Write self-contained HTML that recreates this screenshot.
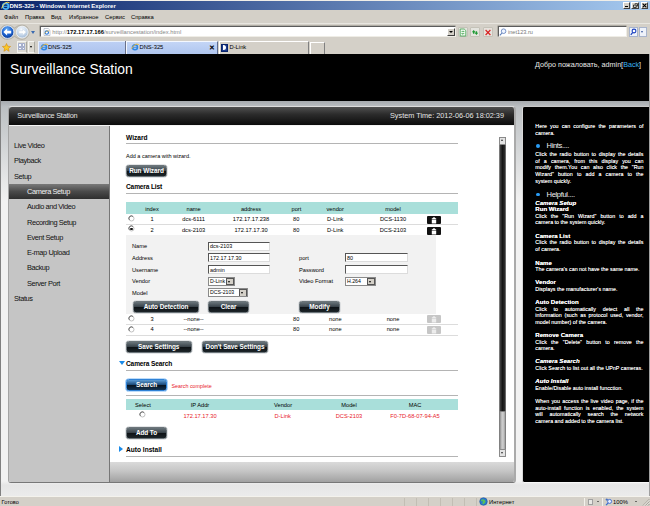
<!DOCTYPE html>
<html><head><meta charset="utf-8"><title>DNS-325</title>
<style>
html,body{margin:0;padding:0}
body{width:650px;height:506px;position:relative;overflow:hidden;background:#d4d0c8;font-family:"Liberation Sans",sans-serif;font-size:6px;color:#000}
div,span{box-sizing:border-box}
.a{position:absolute}
.t{position:absolute;white-space:nowrap;line-height:10px;height:10px;margin-top:-5px}
.c{text-align:center}
.b{font-weight:bold}
.red{color:#e8202a}
.btn{position:absolute;height:12px;border-radius:2.5px;background:linear-gradient(#6a757b 0%,#39434a 46%,#0d1216 52%,#1d2529 100%);border:1px solid #6c757a;color:#fff;font-weight:bold;font-size:6.4px;letter-spacing:-.05px;text-align:center;line-height:10px;white-space:nowrap;box-shadow:0 0 0 .5px #c8cccf}
.inp{position:absolute;height:9px;padding-top:.7px;background:#fff;border:1px solid #555;border-right-color:#dcdcdc;border-bottom-color:#dcdcdc;font-size:5.4px;line-height:7.6px;padding-left:1px;white-space:nowrap;overflow:hidden}
.sel{position:absolute;height:9px;background:#fff;border:1px solid #8a8a8a;font-size:5.2px;line-height:7.6px;padding-left:1px;white-space:nowrap;overflow:hidden}
.sel i{position:absolute;right:0;top:0;width:6px;height:5.5px;background:#d4d0c8;border:.5px solid #555;display:block}
.sel i:after{content:"";position:absolute;left:1.2px;top:2px;border:1.5px solid transparent;border-top:2px solid #000}
.hl{position:absolute;height:1px;background:#b4b4b4}
.th{position:absolute;background:#a9dfda}
.rad{position:absolute;width:5px;height:5px;border-radius:50%;background:#fff;border:1px solid #777;border-right-color:#ccc;border-bottom-color:#ccc}
.h{position:absolute;left:535.3px;width:108.2px;color:#fff;text-shadow:0 0 .45px rgba(255,255,255,.85);font-size:5.35px;line-height:6.6px;height:6.6px;text-align:justify;white-space:nowrap}
.hb{font-weight:bold;font-size:6.1px}
.hi{font-weight:bold;font-style:italic;font-size:6.1px}
.side{position:absolute;font-size:7.4px;letter-spacing:-.4px;color:#111;white-space:nowrap;line-height:10px;height:10px;margin-top:-5px}
</style></head><body>

<!-- ===== Title bar ===== -->
<div class="a" style="left:0;top:0;width:650px;height:1px;background:#f0eee8"></div>
<div class="a" style="left:0;top:1px;width:650px;height:9.2px;background:linear-gradient(90deg,#0a246a 0%,#a6caf0 100%)"></div>
<svg class="a" style="left:.5px;top:.8px" width="9" height="9.500" viewBox="0 0 9 9.500"><circle cx="4.600" cy="5.200" r="2.900" fill="none" stroke="#48b4f6" stroke-width="1.700"/><path d="M2 5.300h5.200" stroke="#48b4f6" stroke-width="1"/><path d="M.6 7.400Q3.600 -.6 8.600 1.800" stroke="#f6d050" stroke-width="1" fill="none"/></svg>
<div class="t b" style="left:9.5px;top:5.6px;color:#fff;font-size:6.02px">DNS-325 - Windows Internet Explorer</div>
<div class="a" style="left:623.3px;top:2px;width:7px;height:6.5px;background:#d4d0c8;border:.6px solid #fff;border-right-color:#404040;border-bottom-color:#404040"></div>
<div class="a" style="left:631.3px;top:2px;width:7.500px;height:6.5px;background:#d4d0c8;border:.6px solid #fff;border-right-color:#404040;border-bottom-color:#404040"></div>
<div class="a" style="left:640.700px;top:2px;width:7.500px;height:6.5px;background:#d4d0c8;border:.6px solid #fff;border-right-color:#404040;border-bottom-color:#404040"></div>
<div class="a" style="left:625px;top:6.200px;width:3px;height:1px;background:#000"></div>
<svg class="a" style="left:632.500px;top:2.800px" width="5" height="5" viewBox="0 0 5 5"><path d="M1.800 .700h2.700v2.400h-1M.5 2h2.700v2.500h-2.700z" fill="none" stroke="#000" stroke-width=".7"/></svg>
<svg class="a" style="left:642px;top:2.800px" width="5" height="5" viewBox="0 0 5 5"><path d="M.6 .6l3.800 3.800M4.400 .6l-3.800 3.800" stroke="#000" stroke-width="1.100"/></svg>

<!-- ===== Menu bar ===== -->
<div class="t" style="left:4px;top:17px;font-size:5.8px">Файл</div>
<div class="t" style="left:25px;top:17px;font-size:5.8px">Правка</div>
<div class="t" style="left:51px;top:17px;font-size:5.8px">Вид</div>
<div class="t" style="left:69px;top:17px;font-size:5.8px">Избранное</div>
<div class="t" style="left:105px;top:17px;font-size:5.8px">Сервис</div>
<div class="t" style="left:131px;top:17px;font-size:5.8px">Справка</div>
<div class="a" style="left:0;top:23px;width:650px;height:1px;background:#e8e6e0"></div>

<!-- ===== Address bar ===== -->
<svg class="a" style="left:0;top:24px" width="30" height="16" viewBox="0 0 30 16">
<defs><radialGradient id="gb" cx="45%" cy="30%" r="75%"><stop offset="0" stop-color="#6ab0f8"/><stop offset=".55" stop-color="#1c62d0"/><stop offset="1" stop-color="#0a3488"/></radialGradient>
<radialGradient id="gf" cx="45%" cy="30%" r="75%"><stop offset="0" stop-color="#f8fbfe"/><stop offset=".6" stop-color="#c4d6ea"/><stop offset="1" stop-color="#9cb4d0"/></radialGradient></defs>
<path d="M7 1a7 7 0 0 0 0 14.4q4 0 7.5-3q3.5 3 7.5 3a7 7 0 0 0 0-14.4q-4 0-7.5 3q-3.500-3-7.500-3z" fill="#c8c6be" stroke="#9a978c" stroke-width=".5"/>
<circle cx="7.6" cy="8.1" r="6.3" fill="url(#gb)" stroke="#eef4fc" stroke-width=".8"/>
<path d="M3.400 8.100l3.700-3.500v2.100h4.100v2.800h-4.100v2.100z" fill="#fff"/>
<circle cx="22.200" cy="8.100" r="5.900" fill="url(#gf)" stroke="#f4f6fa" stroke-width=".8"/>
<path d="M26.200 8.100l-3.500-3.300v2h-3.900v2.600h3.900v2z" fill="#fff" stroke="#aebfd6" stroke-width=".3"/>
</svg>
<div class="a" style="left:30.5px;top:31px;border:2.5px solid transparent;border-top:3px solid #3a6ab0"></div>
<div class="a" style="left:40px;top:26px;width:415.5px;height:11px;background:#fff;border:1px solid;border-color:#5c5c5c #efede6 #efede6 #5c5c5c;box-shadow:-.5px -.5px 0 #8c8a82"></div>
<svg class="a" style="left:42.5px;top:27.5px" width="8" height="8" viewBox="0 0 8 8"><path d="M1 .5h4.200l1.800 1.800v5.200h-6z" fill="#fff" stroke="#8a96a8" stroke-width=".5"/><circle cx="3.800" cy="4.600" r="1.700" fill="none" stroke="#2a7ae0" stroke-width="1.100"/><path d="M1.400 5.800q2-4 5-3" stroke="#e8b020" stroke-width=".6" fill="none"/></svg>
<div class="t" style="left:52.3px;top:32px;font-size:5.8px;color:#888">http://<span style="color:#000;font-weight:bold">172.17.17.166</span>/surveillancestation/index.html</div>
<div class="a" style="left:446.5px;top:27.5px;width:8px;height:8.5px;background:#d4d0c8;border:.5px solid #fff;border-right-color:#404040;border-bottom-color:#404040"></div>
<div class="a" style="left:448.5px;top:31px;border:2px solid transparent;border-top:2.5px solid #000"></div>
<div class="a" style="left:457.5px;top:26.5px;width:10px;height:10.500px;background:#e4e4de;border:.5px solid #c4c2b8;border-radius:1px"></div>
<svg class="a" style="left:458.5px;top:27.5px" width="8" height="9" viewBox="0 0 8 9"><path d="M1.200 1h4l1.600 1.600v5.400h-5.600z" fill="#f4fbf4" stroke="#3aa04a" stroke-width=".8"/><path d="M2.500 3.600h2.600l-.9-.9M5.300 5.600h-2.600l.9.900" stroke="#2a9a3a" stroke-width=".7" fill="none"/></svg>
<div class="a" style="left:470px;top:26.500px;width:10px;height:10.500px;background:#e4e4de;border:.5px solid #c4c2b8;border-radius:1px"></div>
<svg class="a" style="left:471px;top:27.500px" width="8" height="9" viewBox="0 0 8 9"><path d="M.8 4.200l1.900-2.200 1.900 2.200h-1.200v1.600h-1.400v-1.600zM3.600 4.800l1.800 2.200 1.900-2.200h-1.200v-1.600h-1.400v1.600z" fill="#1f9a34"/></svg>
<div class="a" style="left:482.500px;top:26.500px;width:10px;height:10.500px;background:#e6e2dc;border:.5px solid #c4c2b8;border-radius:1px"></div>
<svg class="a" style="left:483.500px;top:27.500px" width="8" height="9" viewBox="0 0 8 9"><path d="M1.600 2l4.800 5M6.400 2l-4.800 5" stroke="#d82424" stroke-width="1.200"/></svg>
<div class="a" style="left:497.5px;top:26px;width:129px;height:11px;background:#fff;border:1px solid;border-color:#5c5c5c #efede6 #efede6 #5c5c5c;box-shadow:-.5px -.5px 0 #8c8a82"></div>
<svg class="a" style="left:499px;top:27.5px" width="8" height="8" viewBox="0 0 8 8"><circle cx="4.6" cy="3.2" r="2.3" fill="#eef4ff" stroke="#5a7ab8" stroke-width=".8"/><path d="M3 5 L.8 7.4" stroke="#5a7ab8" stroke-width="1.1"/></svg>
<div class="t" style="left:508px;top:32px;font-size:5.6px;color:#777">inet123.ru</div>
<div class="a" style="left:629px;top:27px;width:9px;height:9.5px;background:#eef2fa;border:.5px solid #a8b4cc"></div>
<svg class="a" style="left:630px;top:28px" width="7" height="8" viewBox="0 0 7 8"><circle cx="4" cy="3" r="1.9" fill="#fff" stroke="#1a40c0" stroke-width="1.1"/><path d="M2.6 4.6 L.8 6.8" stroke="#1a40c0" stroke-width="1.2"/></svg>
<div class="a" style="left:638.5px;top:27px;width:8px;height:9.5px;background:#eef2fa;border:.5px solid #a8b4cc"></div>
<div class="a" style="left:641px;top:31px;border:1.5px solid transparent;border-top:2px solid #3a5aa0"></div>

<!-- ===== Tab bar ===== -->
<svg class="a" style="left:1.500px;top:42.800px" width="9" height="9" viewBox="0 0 9 9"><path d="M4.500 .500l1.200 2.700 2.900.300-2.200 1.900.700 2.900-2.600-1.600-2.600 1.600.700-2.900-2.200-1.900 2.900-.300z" fill="#fbc928" stroke="#d48a10" stroke-width=".6"/></svg>
<div class="a" style="left:16.5px;top:41px;width:10px;height:12px;background:#dcdad2;border:.5px solid #f4f4f0;border-right-color:#a8a8a0"></div>
<div class="a" style="left:18.2px;top:43.3px;width:3.400px;height:3.400px;border:.6px solid #a4aecb;background:#f6f8fe;border-radius:.6px"></div>
<div class="a" style="left:21.7px;top:43.3px;width:3.400px;height:3.400px;border:.6px solid #a4aecb;background:#f6f8fe;border-radius:.6px"></div>
<div class="a" style="left:18.2px;top:46.8px;width:3.400px;height:3.400px;border:.6px solid #a4aecb;background:#f6f8fe;border-radius:.6px"></div>
<div class="a" style="left:21.7px;top:46.8px;width:3.400px;height:3.400px;border:.6px solid #a4aecb;background:#f6f8fe;border-radius:.6px"></div>
<div class="a" style="left:28px;top:41px;width:7px;height:12px;background:#dcdad2;border:.5px solid #f4f4f0;border-right-color:#a8a8a0"></div>
<div class="a" style="left:29.8px;top:46px;border:1.7px solid transparent;border-top:2.2px solid #000"></div>
<div class="a" style="left:38px;top:40.5px;width:87px;height:13.5px;background:linear-gradient(#bccff4,#adc3ed);border-left:1px solid #e8f0fc;border-top:.5px solid #e8f0fc"></div>
<div class="a" style="left:126px;top:40.500px;width:91.500px;height:13.500px;background:linear-gradient(#c3d5f6,#b0c6ef);border-left:1px solid #f4f8ff;border-right:1px solid #5a6a90;border-top:.6px solid #f4f8ff;box-shadow:-1px 0 0 #6a7088"></div>
<div class="a" style="left:218.5px;top:41px;width:90px;height:13px;background:#d4d0c8;border-left:1px solid #fff;border-right:1px solid #808080;border-top:.5px solid #fff"></div>
<div class="a" style="left:309.5px;top:41.5px;width:15px;height:12.5px;background:#d4d0c8;border-left:1px solid #fff;border-right:1px solid #808080;border-top:.5px solid #fff"></div>
<svg class="a" style="left:40px;top:43px" width="8" height="8" viewBox="0 0 8 8"><circle cx="4" cy="4.2" r="2.500" fill="none" stroke="#2f86e2" stroke-width="1.500"/><path d="M1.800 4.300h4.600" stroke="#2f86e2" stroke-width=".9"/><path d="M0.5 5.8 Q4 -0.5 7.8 1.6" stroke="#f0b830" stroke-width=".9" fill="none"/></svg>
<div class="t" style="left:48px;top:47.3px;font-size:5.8px">DNS-325</div>
<svg class="a" style="left:130.5px;top:43px" width="8" height="8" viewBox="0 0 8 8"><circle cx="4" cy="4.2" r="2.500" fill="none" stroke="#2f86e2" stroke-width="1.500"/><path d="M1.800 4.300h4.600" stroke="#2f86e2" stroke-width=".9"/><path d="M0.5 5.8 Q4 -0.5 7.8 1.6" stroke="#f0b830" stroke-width=".9" fill="none"/></svg>
<div class="t" style="left:139.5px;top:47.3px;font-size:5.8px">DNS-325</div>
<div class="t b" style="left:209.3px;top:47.5px;font-size:6.5px">✕</div>
<div class="a" style="left:221px;top:43.5px;width:7px;height:8px;background:#1a3a8c;border:.5px solid #0a246a"></div>
<div class="a" style="left:223px;top:45px;width:3.4px;height:5px;background:#fff;border-radius:0 3px 3px 0"></div>
<div class="t" style="left:229.5px;top:47.3px;font-size:5.8px">D-Link</div>

<!-- ===== Page ===== -->
<div class="a" id="page" style="left:0;top:54px;width:650px;height:442px;background:#e9e9e9;overflow:hidden">
</div>
<div class="a" style="left:1px;top:54px;width:648px;height:47px;background:#000"></div>
<div class="a" style="left:1px;top:101px;width:648px;height:395px;background:linear-gradient(#a6aaae 0,#bcc0c3 6px,#f2f2f2 100px,#f2f2f2 380px,#e6e6e6 384px,#ebebeb 100%)"></div>
<div class="a" style="left:0;top:54px;width:1px;height:442px;background:#808080"></div>
<div class="a" style="left:649px;top:54px;width:1px;height:442px;background:#a0a0a0"></div>
<div class="t" style="left:10px;top:68.6px;font-size:13.9px;color:#fff;line-height:20px;height:20px;margin-top:-10px">Surveillance Station</div>
<div class="t" style="left:535px;top:64.5px;font-size:7.2px;color:#e8e8e8">Добро пожаловать, admin[<span style="color:#3ab0f0">Back</span>]</div>

<!-- main panel -->
<div class="a" style="left:7.7px;top:106px;width:508.3px;height:377.3px;background:#fff;border-radius:4px 4px 3px 3px;border:1.3px solid #a4a4a4;border-right:2px solid #aaa;border-top:1px solid #dcdcdc;border-bottom:1px solid #777;overflow:hidden">
  <div class="a" style="left:0;top:0;width:510px;height:17.5px;background:linear-gradient(#505050,#2c2c2c 40%,#0c0c0c)"></div>
  <div class="a" style="left:0;top:17.5px;width:510px;height:1px;background:#f4f4f4"></div>
  <div class="a" style="left:0;top:18.5px;width:100px;height:360px;background:#c5c5c5"></div>
  <div class="a" style="left:100px;top:18.5px;width:1px;height:360px;background:#777"></div>
  <div class="a" style="left:0;top:77px;width:100px;height:14.5px;background:linear-gradient(#7a7a7a,#4a4a4a 50%,#2e2e2e)"></div>
  <div class="a" style="left:101px;top:354.5px;width:410px;height:22px;background:linear-gradient(#dadada,#c6c6c6 40%,#9a9a9a)"></div>
</div>
<div class="t" style="left:17.3px;top:115.7px;font-size:7.3px;letter-spacing:-.22px;color:#e4e4e4">Surveillance Station</div>
<div class="t" style="left:390px;top:115.5px;font-size:7.3px;color:#e4e4e4">System Time: 2012-06-06 18:02:39</div>

<!-- sidebar items -->
<div class="side" style="left:14px;top:146.0px">Live Video</div>
<div class="side" style="left:14px;top:161.3px">Playback</div>
<div class="side" style="left:14px;top:176.6px">Setup</div>
<div class="side" style="left:27px;top:191.9px;color:#f0f0f0">Camera Setup</div>
<div class="side" style="left:27px;top:207.2px">Audio and Video</div>
<div class="side" style="left:27px;top:222.5px">Recording Setup</div>
<div class="side" style="left:27px;top:237.8px">Event Setup</div>
<div class="side" style="left:27px;top:253.1px">E-map Upload</div>
<div class="side" style="left:27px;top:268.4px">Backup</div>
<div class="side" style="left:27px;top:283.7px">Server Port</div>
<div class="side" style="left:14px;top:299.0px">Status</div>

<!-- CONTENT -->
<div class="ct">
<!-- scrollbar -->
<div class="a" style="left:499px;top:137px;width:7px;height:320px;background:linear-gradient(90deg,#9a9a9a 0,#3a3a3a 1.5px,#161616 50%,#2a2a2a 80%,#8a8a8a 100%)"></div>
<div class="a" style="left:499px;top:137px;width:7px;height:8px;background:#e4e4e4;border:.7px solid #8a8a8a;border-radius:1px"></div>
<div class="a" style="left:501px;top:139px;border:1.5px solid transparent;border-bottom:2px solid #333;border-top:0"></div>
<div class="a" style="left:499px;top:410.7px;width:7px;height:46px;background:linear-gradient(90deg,#909090,#c4c4c4 35%,#d0d0d0 60%,#a0a0a0);border:.5px solid #808080"></div>
<div class="a" style="left:499px;top:448.5px;width:7px;height:8px;background:#e4e4e4;border:.7px solid #8a8a8a;border-radius:1px"></div>
<div class="a" style="left:501px;top:451.5px;border:1.5px solid transparent;border-top:2px solid #333;border-bottom:0"></div>

<!-- Wizard -->
<div class="t b" style="left:126px;top:137.6px;font-size:6.6px">Wizard</div>
<div class="hl" style="left:126px;top:143px;width:332px"></div>
<div class="t" style="left:126px;top:156.2px;font-size:5.5px">Add a camera with wizard.</div>
<div class="btn" style="left:126px;top:165px;width:41px">Run Wizard</div>
<div class="t b" style="left:126px;top:187.2px;font-size:6.6px;letter-spacing:-.15px">Camera List</div>
<div class="hl" style="left:126px;top:193px;width:332px"></div>

<!-- camera table -->
<div class="th" style="left:126px;top:202px;width:332px;height:12px"></div>
<div class="t c" style="left:142px;width:20px;top:208.5px;font-size:5.7px">index</div>
<div class="t c" style="left:178.6px;width:30px;top:208.5px;font-size:5.7px">name</div>
<div class="t c" style="left:231px;width:40px;top:208.5px;font-size:5.7px">address</div>
<div class="t" style="left:291.5px;top:208.5px;font-size:5.7px">port</div>
<div class="t" style="left:326.5px;top:208.5px;font-size:5.7px">vendor</div>
<div class="t c" style="left:378px;width:30px;top:208.5px;font-size:5.7px">model</div>

<svg class="a" style="left:128.0px;top:214.5px" width="7" height="7" viewBox="0 0 7 7"><circle cx="3.500" cy="3.500" r="2.500" fill="#fff" stroke="#b8b8b8" stroke-width=".9"/><path d="M1.300 4.800a2.500 2.500 0 0 1 3.600-3.400" fill="none" stroke="#555" stroke-width=".9"/></svg>
<div class="t c" style="left:142px;width:20px;top:219.2px;font-size:5.7px">1</div>
<div class="t c" style="left:178.6px;width:30px;top:219.2px;font-size:5.7px">dcs-6111</div>
<div class="t c" style="left:231px;width:40px;top:219.2px;font-size:5.7px">172.17.17.238</div>
<div class="t" style="left:293px;top:219.2px;font-size:5.7px">80</div>
<div class="t" style="left:327px;top:219.2px;font-size:5.7px">D-Link</div>
<div class="t c" style="left:378px;width:30px;top:219.2px;font-size:5.7px">DCS-1130</div>
<div class="hl" style="left:126px;top:224.3px;width:332px;background:#dcdcdc"></div>
<svg class="a" style="left:128.0px;top:225.1px" width="7" height="7" viewBox="0 0 7 7"><circle cx="3.500" cy="3.500" r="2.500" fill="#fff" stroke="#b8b8b8" stroke-width=".9"/><path d="M1.300 4.800a2.500 2.500 0 0 1 3.600-3.400" fill="none" stroke="#555" stroke-width=".9"/></svg>
<div class="a" style="left:130.4px;top:227.5px;width:2.200px;height:2.200px;border-radius:50%;background:#111"></div>
<div class="t c" style="left:142px;width:20px;top:229.8px;font-size:5.7px">2</div>
<div class="t c" style="left:178.6px;width:30px;top:229.8px;font-size:5.7px">dcs-2103</div>
<div class="t c" style="left:231px;width:40px;top:229.8px;font-size:5.7px">172.17.17.30</div>
<div class="t" style="left:293px;top:229.8px;font-size:5.7px">80</div>
<div class="t" style="left:327px;top:229.8px;font-size:5.7px">D-Link</div>
<div class="t c" style="left:378px;width:30px;top:229.8px;font-size:5.7px">DCS-2103</div>

<!-- delete icons -->
<svg class="a" style="left:427px;top:215.5px" width="14" height="8" viewBox="0 0 14 8"><rect width="14" height="8" rx="1" fill="#111"/><path d="M4.4 3.1L7 .9l2.6 2.2zM4.8 3.6h4.4v3.8H4.8z" fill="#fff"/></svg>
<svg class="a" style="left:427px;top:226.5px" width="14" height="8" viewBox="0 0 14 8"><rect width="14" height="8" rx="1" fill="#111"/><path d="M4.4 3.1L7 .9l2.6 2.2zM4.8 3.6h4.4v3.8H4.8z" fill="#fff"/></svg>

<!-- edit form -->
<div class="a" style="left:126px;top:235px;width:310px;height:79px;background:#f2f2f2"></div>
<div class="t" style="left:132px;top:246.2px;font-size:5.7px">Name</div>
<div class="inp" style="left:208px;top:241.5px;width:61.5px">dcs-2103</div>
<div class="t" style="left:132px;top:257.9px;font-size:5.7px">Address</div>
<div class="inp" style="left:208px;top:253.2px;width:61.5px">172.17.17.30</div>
<div class="t" style="left:132px;top:269.6px;font-size:5.7px">Username</div>
<div class="inp" style="left:208px;top:264.9px;width:61.5px">admin</div>
<div class="t" style="left:132px;top:281.3px;font-size:5.7px">Vendor</div>
<div class="sel" style="left:208px;top:276.6px;width:27px">D-Link<i></i></div>
<div class="t" style="left:132px;top:293px;font-size:5.7px">Model</div>
<div class="sel" style="left:208px;top:288.3px;width:40px">DCS-2103<i></i></div>
<div class="t" style="left:299px;top:257.9px;font-size:5.7px">port</div>
<div class="inp" style="left:345px;top:253.2px;width:62.5px">80</div>
<div class="t" style="left:299px;top:269.6px;font-size:5.7px">Password</div>
<div class="inp" style="left:345px;top:264.9px;width:62.5px"></div>
<div class="t" style="left:299px;top:281.3px;font-size:5.7px">Video Format</div>
<div class="sel" style="left:345px;top:276.6px;width:31px">H.264<i></i></div>
<div class="btn" style="left:133px;top:300.6px;width:66px">Auto Detection</div>
<div class="btn" style="left:208px;top:300.6px;width:41px">Clear</div>
<div class="btn" style="left:299px;top:300.6px;width:41px">Modify</div>

<!-- rows 3, 4 -->
<svg class="a" style="left:128.0px;top:314.5px" width="7" height="7" viewBox="0 0 7 7"><circle cx="3.500" cy="3.500" r="2.500" fill="#fff" stroke="#b8b8b8" stroke-width=".9"/><path d="M1.300 4.800a2.500 2.500 0 0 1 3.600-3.400" fill="none" stroke="#555" stroke-width=".9"/></svg>
<div class="t c" style="left:142px;width:20px;top:319px;font-size:5.7px">3</div>
<div class="t c" style="left:178.6px;width:30px;top:319px;font-size:5.7px">--none--</div>
<div class="t" style="left:293px;top:319px;font-size:5.7px">80</div>
<div class="t" style="left:329px;top:319px;font-size:5.7px">none</div>
<div class="t c" style="left:378px;width:30px;top:319px;font-size:5.7px">none</div>
<div class="hl" style="left:126px;top:324px;width:332px;background:#dcdcdc"></div>
<svg class="a" style="left:128.0px;top:325.6px" width="7" height="7" viewBox="0 0 7 7"><circle cx="3.500" cy="3.500" r="2.500" fill="#fff" stroke="#b8b8b8" stroke-width=".9"/><path d="M1.300 4.800a2.500 2.500 0 0 1 3.600-3.400" fill="none" stroke="#555" stroke-width=".9"/></svg>
<div class="t c" style="left:142px;width:20px;top:329.2px;font-size:5.7px">4</div>
<div class="t c" style="left:178.6px;width:30px;top:329.2px;font-size:5.7px">--none--</div>
<div class="t" style="left:293px;top:329.2px;font-size:5.7px">80</div>
<div class="t" style="left:329px;top:329.2px;font-size:5.7px">none</div>
<div class="t c" style="left:378px;width:30px;top:329.2px;font-size:5.7px">none</div>
<div class="hl" style="left:126px;top:334.5px;width:332px;background:#dcdcdc"></div>
<svg class="a" style="left:427px;top:315px" width="14" height="8" viewBox="0 0 14 8"><rect width="14" height="8" rx="1" fill="#c6c6c6"/><path d="M4.4 3.1L7 .9l2.6 2.2zM4.8 3.6h4.4v3.8H4.8z" fill="#ececec"/></svg>
<svg class="a" style="left:427px;top:325.5px" width="14" height="8" viewBox="0 0 14 8"><rect width="14" height="8" rx="1" fill="#c6c6c6"/><path d="M4.4 3.1L7 .9l2.6 2.2zM4.8 3.6h4.4v3.8H4.8z" fill="#ececec"/></svg>

<div class="btn" style="left:126px;top:341.3px;width:65.5px">Save Settings</div>
<div class="btn" style="left:202px;top:341.3px;width:66px">Don't Save Settings</div>

<!-- Camera Search -->
<div class="a" style="left:118.8px;top:361.3px;border:3.4px solid transparent;border-top:4.8px solid #1a8ae8;border-bottom:0"></div>
<div class="t b" style="left:126px;top:363.8px;font-size:6.6px;letter-spacing:-.15px">Camera Search</div>
<div class="hl" style="left:126px;top:370px;width:332px"></div>
<div class="btn" style="left:126px;top:379.3px;width:41px;border-color:#2f82d6;box-shadow:0 0 0 .6px #7ab8f4;background:linear-gradient(#5c9cd6 0%,#1f4d7c 45%,#07131f 52%,#143454 100%)">Search</div>
<div class="t red" style="left:171.5px;top:386px;font-size:5.35px">Search complete</div>
<div class="hl" style="left:126px;top:394.5px;width:332px"></div>
<div class="th" style="left:126px;top:399px;width:332px;height:11.3px"></div>
<div class="t" style="left:135px;top:405px;font-size:5.7px">Select</div>
<div class="t c" style="left:185px;width:30px;top:405px;font-size:5.7px">IP Addr</div>
<div class="t" style="left:274px;top:405px;font-size:5.7px">Vendor</div>
<div class="t c" style="left:334px;width:30px;top:405px;font-size:5.7px">Model</div>
<div class="t c" style="left:400px;width:30px;top:405px;font-size:5.7px">MAC</div>
<svg class="a" style="left:139.0px;top:410.5px" width="7" height="7" viewBox="0 0 7 7"><circle cx="3.500" cy="3.500" r="2.500" fill="#fff" stroke="#b8b8b8" stroke-width=".9"/><path d="M1.300 4.800a2.500 2.500 0 0 1 3.600-3.400" fill="none" stroke="#555" stroke-width=".9"/></svg>
<div class="t c red" style="left:180px;width:40px;top:415.5px;font-size:5.7px">172.17.17.30</div>
<div class="t red" style="left:274.5px;top:415.5px;font-size:5.7px">D-Link</div>
<div class="t c red" style="left:334px;width:30px;top:415.5px;font-size:5.7px">DCS-2103</div>
<div class="t c red" style="left:390px;width:50px;top:415.5px;font-size:5.7px">F0-7D-68-07-94-A5</div>
<div class="btn" style="left:126px;top:427px;width:41px">Add To</div>

<!-- Auto Install -->
<div class="a" style="left:119.3px;top:446.3px;border:3.2px solid transparent;border-left:4px solid #1a8ae8;border-right:0"></div>
<div class="t b" style="left:126px;top:449.7px;font-size:6.6px">Auto Install</div>
<div class="hl" style="left:126px;top:456px;width:332px"></div>
</div>
<!-- /CONTENT -->
<!-- HELP -->
<div class="a" style="left:522.2px;top:106px;width:126.8px;height:377.2px;background:#000;border-radius:2.5px 0 0 2.5px;border-left:.8px solid #d8d8d8;border-top:.8px solid #c8c8c8;border-bottom:.8px solid #f8f8f8"></div>
<div class="h" style="top:123.1px;text-align-last:justify">Here you can configure the parameters of</div>
<div class="h" style="top:129.7px">camera.</div>
<div class="a" style="left:536px;top:144px;width:3.800px;height:3.800px;border-radius:50%;background:#2a9cf4"></div>
<div class="t" style="left:546.5px;top:146.3px;font-size:7.6px;letter-spacing:-.35px;color:#f0f0f0">Hints....</div>
<div class="h" style="top:151.1px;text-align-last:justify">Click the radio button to display the details</div>
<div class="h" style="top:157.8px;text-align-last:justify">of a camera, from this display you can</div>
<div class="h" style="top:164.4px;text-align-last:justify">modify them.You can also click the "Run</div>
<div class="h" style="top:171.1px;text-align-last:justify">Wizard" button to add a camera to the</div>
<div class="h" style="top:178.0px">system quickly.</div>
<div class="a" style="left:536px;top:192.600px;width:3.800px;height:3.800px;border-radius:50%;background:#2a9cf4"></div>
<div class="t" style="left:546.5px;top:194.8px;font-size:7.6px;letter-spacing:-.35px;color:#f0f0f0">Helpful....</div>
<div class="h hi" style="top:199.5px">Camera Setup</div>
<div class="h hb" style="top:206.1px">Run Wizard</div>
<div class="h" style="top:212.8px;text-align-last:justify">Click the "Run Wizard" button to add a</div>
<div class="h" style="top:219.3px">camera to the system quickly.</div>
<div class="h hb" style="top:232.5px">Camera List</div>
<div class="h" style="top:239.3px;text-align-last:justify">Click the radio button to display the details</div>
<div class="h" style="top:246.1px">of camera.</div>
<div class="h hb" style="top:259.5px">Name</div>
<div class="h" style="top:266.1px">The camera's can not have the same name.</div>
<div class="h hb" style="top:279.1px">Vendor</div>
<div class="h" style="top:285.8px">Displays the manufacturer's name.</div>
<div class="h hb" style="top:298.9px">Auto Detection</div>
<div class="h" style="top:305.5px;text-align-last:justify">Click to automatically detect all the</div>
<div class="h" style="top:312.3px;text-align-last:justify">information (such as protocol used, vendor,</div>
<div class="h" style="top:318.8px">model number) of the camera.</div>
<div class="h hb" style="top:332.1px">Remove Camera</div>
<div class="h" style="top:338.6px;text-align-last:justify">Click the "Delete" button to remove the</div>
<div class="h" style="top:345.1px">camera.</div>
<div class="h hi" style="top:358.4px">Camera Search</div>
<div class="h" style="top:364.9px">Click Search to list out all the UPnP cameras.</div>
<div class="h hi" style="top:378.1px">Auto Install</div>
<div class="h" style="top:384.9px">Enable/Disable auto install funcction.</div>
<div class="h" style="top:398.1px;text-align-last:justify">When you access the live video page, if the</div>
<div class="h" style="top:404.8px;text-align-last:justify">auto-install function is enabled, the system</div>
<div class="h" style="top:411.4px;text-align-last:justify">will automatically search the network</div>
<div class="h" style="top:418.1px">camera and added to the camera list.</div>
<!-- /HELP -->

<!-- ===== Status bar ===== -->
<div class="a" style="left:0;top:496px;width:650px;height:10px;background:#d4d0c8;border-top:1px solid #f4f2ec"></div>
<div class="t" style="left:1.5px;top:501.7px;font-size:5.6px">Готово</div>
<div class="a" style="left:404px;top:498px;width:73px;height:8px;background:repeating-linear-gradient(90deg,#c2beb4 0,#c2beb4 .6px,#fbfaf6 .6px,#fbfaf6 1.3px,transparent 1.3px,transparent 12px)"></div>
<svg class="a" style="left:479px;top:497px" width="9" height="9" viewBox="0 0 9 9"><circle cx="4.5" cy="4.5" r="3.8" fill="#2a78d0" stroke="#1a4a90" stroke-width=".5"/><path d="M2 3.2q1.5-1.6 3-.6t1.6 2-1.8 2.4-1.2-1.6-1.6-.8z" fill="#58c058"/></svg>
<div class="t" style="left:489px;top:501.7px;font-size:5.8px">Интернет</div>
<div class="a" style="left:584px;top:498px;width:1.2px;height:8px;background:linear-gradient(90deg,#9c988e 50%,#f4f2ec 50%)"></div>
<div class="a" style="left:588px;top:498.5px;width:5px;height:6px;background:#e8e8e4;border:.5px solid #a0a0a0"></div>
<div class="a" style="left:596.5px;top:501px;border:1.3px solid transparent;border-top:1.8px solid #000"></div>
<div class="a" style="left:602px;top:498px;width:1.2px;height:8px;background:linear-gradient(90deg,#9c988e 50%,#f4f2ec 50%)"></div>
<svg class="a" style="left:604.5px;top:497.5px" width="8" height="8" viewBox="0 0 8 8"><circle cx="4.6" cy="3.4" r="2" fill="#e8f0ff" stroke="#3a6ad0" stroke-width=".9"/><path d="M3.2 5 L1 7.2" stroke="#3a6ad0" stroke-width="1.1"/><path d="M.6 1.6h2.4M1.8.4v2.4" stroke="#2a5ac0" stroke-width=".7"/></svg>
<div class="t" style="left:613px;top:501.7px;font-size:5.8px">100%</div>
<div class="a" style="left:635px;top:501px;border:1.3px solid transparent;border-top:1.8px solid #000"></div>
<svg class="a" style="left:642px;top:498px" width="8" height="8" viewBox="0 0 8 8"><path d="M7.5 1L1 7.5M7.5 3.5L3.5 7.5M7.5 6L6 7.5" stroke="#8a867c" stroke-width=".7"/><path d="M7.5 1.8L1.8 7.5M7.5 4.3L4.3 7.5" stroke="#fff" stroke-width=".5"/></svg>

</body></html>
